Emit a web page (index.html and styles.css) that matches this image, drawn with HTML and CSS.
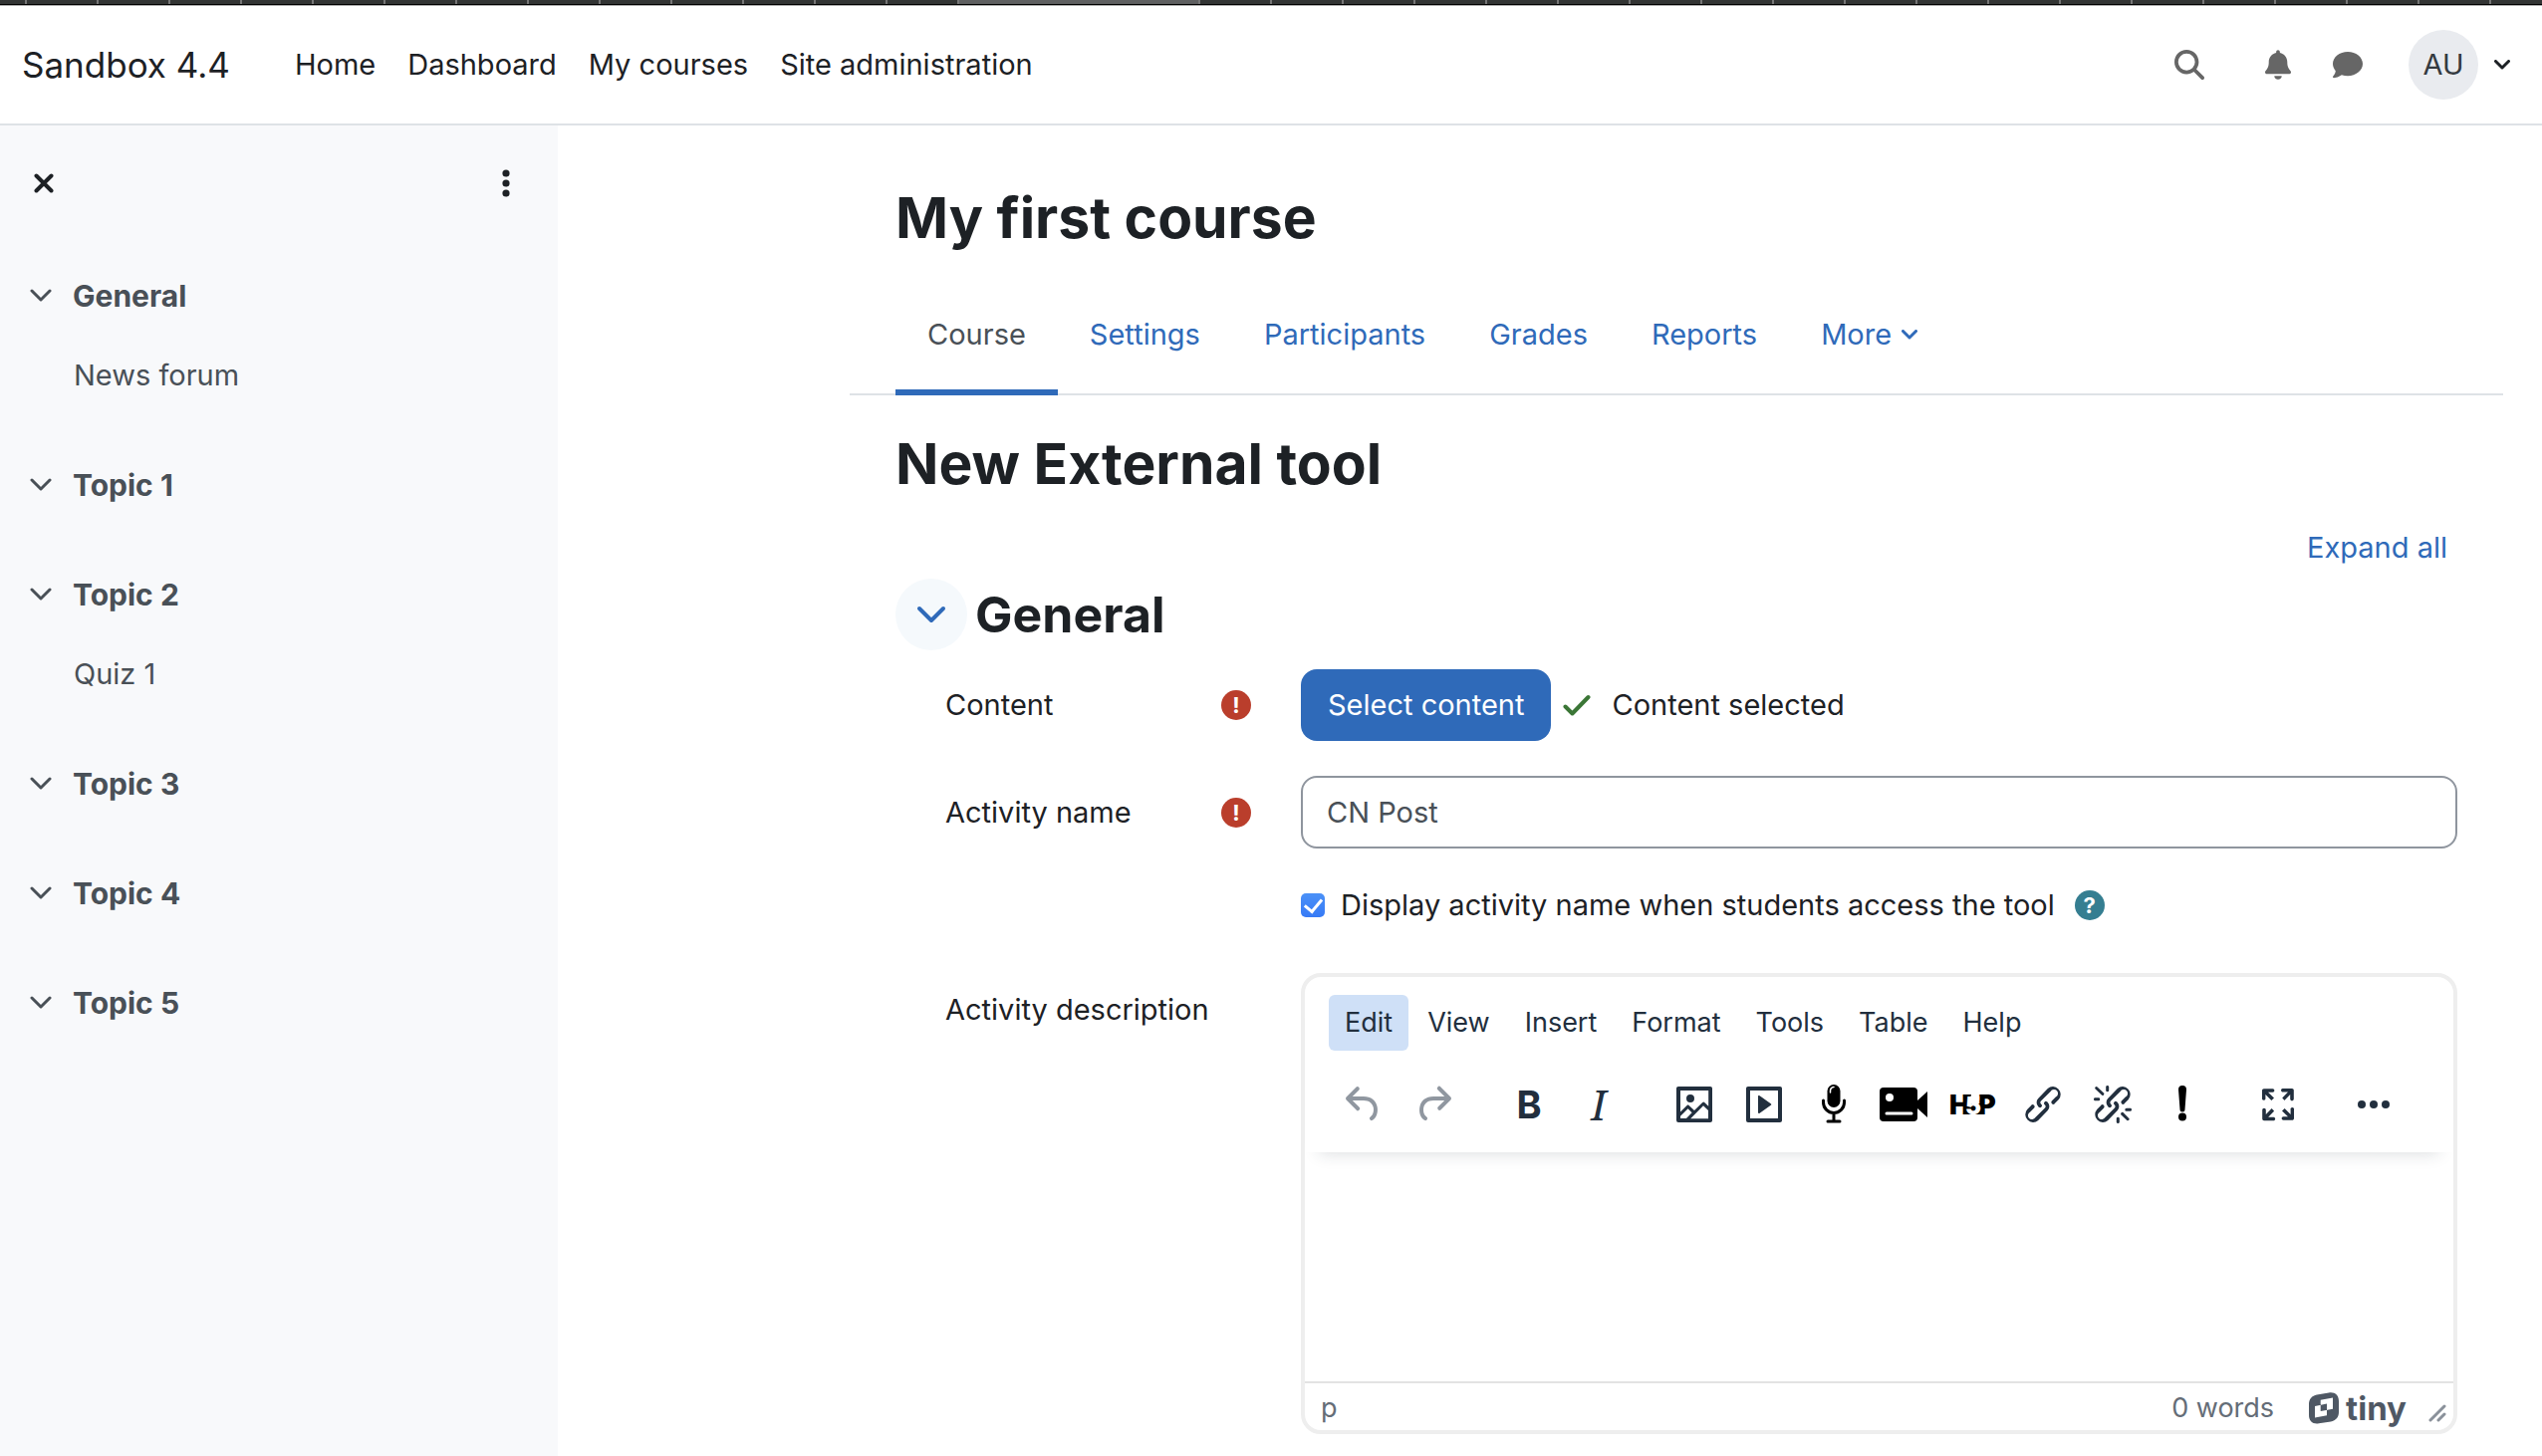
FILE: index.html
```html
<!doctype html>
<html lang="en">
  <head>
    <meta charset="UTF-8" />
    <meta name="viewport" content="width=device-width, initial-scale=1.0" />
    <title>Sandbox 4.4: New External tool</title>
    <link rel="stylesheet" href="styles.css">
  </head>
  <body>
    <div class="tabstrip">
      <div class="tabstrip-start"></div>
      <div class="tabstrip-current"></div>
      <div class="tabstrip-end"></div>
    </div>

    <header class="navbar">
      <a class="brand" href="#">Sandbox 4.4</a>
      <nav class="primary-nav" aria-label="Site">
        <a href="#">Home</a>
        <a href="#">Dashboard</a>
        <a href="#">My courses</a>
        <a href="#">Site administration</a>
      </nav>
      <div class="usernav">
        <button class="nav-icon search" aria-label="Search">
          <svg width="30" height="30" viewBox="0 0 512 512"><path d="M416 208c0 45.9-14.9 88.3-40 122.7L502.6 457.4c12.5 12.5 12.5 32.8 0 45.3s-32.8 12.5-45.3 0L330.7 376c-34.4 25.2-76.8 40-122.7 40C93.1 416 0 322.9 0 208S93.1 0 208 0S416 93.1 416 208zM208 352a144 144 0 1 0 0-288 144 144 0 1 0 0 288z"/></svg>
        </button>
        <button class="nav-icon" aria-label="Notifications">
          <svg width="26" height="30" viewBox="0 0 448 512"><path d="M224 0c-17.7 0-32 14.3-32 32V51.2C119 66 64 130.6 64 208v18.8c0 47-17.3 92.4-48.5 127.6l-7.4 8.3c-8.4 9.4-10.4 22.9-5.3 34.4S19.4 416 32 416H416c12.6 0 24-7.4 29.2-18.9s3.1-25-5.3-34.4l-7.4-8.3C401.3 319.2 384 273.9 384 226.8V208c0-77.4-55-142-128-156.8V32c0-17.7-14.3-32-32-32zm45.3 493.3c12-12 18.7-28.3 18.7-45.3H224 160c0 17 6.7 33.3 18.7 45.3s28.3 18.7 45.3 18.7s33.3-6.7 45.3-18.7z"/></svg>
        </button>
        <button class="nav-icon" aria-label="Messages">
          <svg width="30" height="30" viewBox="0 0 512 512"><path d="M512 240c0 114.900-114.600 208-256 208c-37.100 0-72.300-6.400-104.100-17.900c-11.900 8.700-31.300 20.600-54.300 30.600C73.600 471.100 44.700 480 16 480c-6.500 0-12.300-3.900-14.800-9.900c-2.500-6-1.100-12.800 3.400-17.400l.3-.3c.3-.3 .7-.7 1.300-1.400c1.100-1.200 2.800-3.100 4.900-5.700c4.100-5 9.600-12.400 15.200-21.600c10-16.600 19.500-38.400 21.400-62.900C17.700 326.800 0 285.100 0 240C0 125.100 114.600 32 256 32s256 93.100 256 208z"/></svg>
        </button>
        <button class="user-menu" aria-label="User menu">
          <span class="avatar">AU</span>
          <svg class="line-icon" width="16" height="10" viewBox="0 0 16 10"><path d="M1.500 1.500 8 8l6.500-6.500"/></svg>
        </button>
      </div>
    </header>

    <div class="page">
      <aside class="drawer">
        <div class="drawer-header">
          <button aria-label="Close course index">
            <svg class="close-icon" width="20" height="20" viewBox="0 0 20 20"><path d="m2.500 2.500 15 15m0-15-15 15"/></svg>
          </button>
          <button aria-label="Course index options">
            <svg width="8" height="28" viewBox="0 0 8 28"><circle cx="4" cy="4" r="3.600"/><circle cx="4" cy="14" r="3.600"/><circle cx="4" cy="24" r="3.600"/></svg>
          </button>
        </div>
        <nav class="course-index" aria-label="Course index">
          <section>
            <a class="section-link" href="#"><svg class="line-icon" width="22" height="14" viewBox="0 0 22 14"><path d="m2 2 9 9 9-9"/></svg>General</a>
            <a class="item-link" href="#">News forum</a>
          </section>
          <section>
            <a class="section-link" href="#"><svg class="line-icon" width="22" height="14" viewBox="0 0 22 14"><path d="m2 2 9 9 9-9"/></svg>Topic 1</a>
          </section>
          <section>
            <a class="section-link" href="#"><svg class="line-icon" width="22" height="14" viewBox="0 0 22 14"><path d="m2 2 9 9 9-9"/></svg>Topic 2</a>
            <a class="item-link" href="#">Quiz 1</a>
          </section>
          <section>
            <a class="section-link" href="#"><svg class="line-icon" width="22" height="14" viewBox="0 0 22 14"><path d="m2 2 9 9 9-9"/></svg>Topic 3</a>
          </section>
          <section>
            <a class="section-link" href="#"><svg class="line-icon" width="22" height="14" viewBox="0 0 22 14"><path d="m2 2 9 9 9-9"/></svg>Topic 4</a>
          </section>
          <section>
            <a class="section-link" href="#"><svg class="line-icon" width="22" height="14" viewBox="0 0 22 14"><path d="m2 2 9 9 9-9"/></svg>Topic 5</a>
          </section>
        </nav>
      </aside>

      <main class="content">
        <h1>My first course</h1>
        <nav class="tabs" aria-label="Course">
          <a class="active" href="#" aria-current="page">Course</a>
          <a href="#">Settings</a>
          <a href="#">Participants</a>
          <a href="#">Grades</a>
          <a href="#">Reports</a>
          <a href="#">More<svg class="line-icon" width="16" height="10" viewBox="0 0 16 10"><path d="M1.500 1.500 8 8l6.500-6.500"/></svg></a>
        </nav>

        <h2>New External tool</h2>
        <div class="collapse-all"><a href="#">Expand all</a></div>

        <form>
          <div class="fieldset-header">
            <button type="button" class="toggle" aria-label="Collapse General">
              <svg class="line-icon" width="30" height="18" viewBox="0 0 30 18"><path d="m3 3 12 12 12-12"/></svg>
            </button>
            <h3>General</h3>
          </div>

          <div class="form-row">
            <div class="form-label">
              <label for="select-content">Content</label>
              <span class="badge required" title="Required">!</span>
            </div>
            <div class="form-control">
              <button type="button" class="btn-primary" id="select-content">Select content</button>
              <svg class="tick" width="28" height="22" viewBox="0 0 28 22"><path d="m2.500 12.500 7 7L25.500 3"/></svg>
              <span>Content selected</span>
            </div>
          </div>

          <div class="form-row">
            <div class="form-label">
              <label for="name">Activity name</label>
              <span class="badge required" title="Required">!</span>
            </div>
            <input class="text-input" type="text" id="name" value="CN Post">
          </div>

          <div class="form-row">
            <div class="form-label"></div>
            <div class="form-control">
              <input class="checkbox" type="checkbox" id="show-title" checked>
              <label class="checkbox-label" for="show-title">Display activity name when students access the tool</label>
              <button type="button" class="badge help" aria-label="Help">?</button>
            </div>
          </div>

          <div class="form-row description">
            <div class="form-label"><label for="description">Activity description</label></div>
            <div class="editor">
              <div class="editor-header">
                <div class="menubar">
                  <button type="button" class="selected">Edit</button>
                  <button type="button">View</button>
                  <button type="button">Insert</button>
                  <button type="button">Format</button>
                  <button type="button">Tools</button>
                  <button type="button">Table</button>
                  <button type="button">Help</button>
                </div>
                <div class="toolbar">
                  <div class="group">
                    <button type="button" disabled aria-label="Undo">
                      <svg viewBox="0 0 24 24"><path d="M6.400 8H12c3.700 0 6.200 2 6.800 5.100.6 2.700-.4 5.600-2.300 6.800a1 1 0 0 1-1-1.800c1.100-.6 1.800-2.700 1.400-4.600-.5-2.100-2.100-3.500-4.900-3.500H6.400l3.300 3.300a1 1 0 1 1-1.400 1.400l-5-5a1 1 0 0 1 0-1.400l5-5a1 1 0 0 1 1.400 1.400L6.400 8Z"/></svg>
                    </button>
                    <button type="button" disabled aria-label="Redo">
                      <svg viewBox="0 0 24 24"><path d="M17.600 10H12c-2.800 0-4.400 1.400-4.900 3.500-.4 2 .3 4 1.400 4.600a1 1 0 1 1-1 1.800c-2-1.200-2.900-4.100-2.300-6.800.6-3 3-5.100 6.800-5.100h5.600l-3.300-3.300a1 1 0 1 1 1.400-1.400l5 5a1 1 0 0 1 0 1.400l-5 5a1 1 0 0 1-1.400-1.400l3.300-3.300Z"/></svg>
                    </button>
                  </div>
                  <div class="group">
                    <button type="button" class="bold" aria-label="Bold">B</button>
                    <button type="button" class="italic" aria-label="Italic">I</button>
                  </div>
                  <div class="group">
                    <button type="button" aria-label="Image">
                      <svg viewBox="0 0 24 24"><path fill-rule="evenodd" d="m5 15.700 3.300-3.200c.3-.3.7-.3 1 0L12 15l4.100-4c.3-.4.8-.4 1 0l2 1.900V5H5v10.700ZM5 18V19h3l2.800-2.900-2-2L5 17.900Zm14-3-2.500-2.400-6.400 6.500H19v-4ZM4 3h16c.6 0 1 .4 1 1v16c0 .6-.4 1-1 1H4a1 1 0 0 1-1-1V4c0-.6.4-1 1-1Zm6 8a2 2 0 1 0 0-4 2 2 0 0 0 0 4Z"/></svg>
                    </button>
                    <button type="button" aria-label="Multimedia">
                      <svg viewBox="0 0 24 24"><path fill-rule="evenodd" d="M4 3h16c.6 0 1 .4 1 1v16c0 .6-.4 1-1 1H4a1 1 0 0 1-1-1V4c0-.6.4-1 1-1Zm1 2v14h14V5H5Zm4.800 2.600 5.600 4a.5.5 0 0 1 0 .8l-5.600 4A.5.5 0 0 1 9 16V8a.5.5 0 0 1 .8-.4Z"/></svg>
                    </button>
                    <button type="button" class="black" aria-label="Record audio">
                      <svg viewBox="0 0 48 48"><rect x="17.500" y="4" width="13" height="23" rx="6.500"/><path d="M13.500 20v2a10.500 10.500 0 0 0 21 0v-2M24 33v8M18 41h12" fill="none" stroke="#000" stroke-width="3" stroke-linecap="round"/><path d="M20.500 12v-1.500a4 4 0 0 1 3.500-4" fill="none" stroke="#fff" stroke-width="1.500" stroke-linecap="round"/></svg>
                    </button>
                    <button type="button" class="black" aria-label="Record video">
                      <svg viewBox="0 0 48 48"><rect y="7" width="38" height="34" rx="4"/><path d="m38 20 10-9v26l-10-9Z"/><circle cx="10" cy="17" r="4" fill="#fff"/><path d="M7 33h25" stroke="#fff" stroke-width="3" stroke-linecap="round"/></svg>
                    </button>
                    <button type="button" class="black h5p" aria-label="H5P">
                      <svg viewBox="0 0 48 48"><path d="M17 14h5l-3 11h-3zM15 23h19v11H15z"/><text x="0" y="34">H</text><text x="29" y="34">P</text><text class="five" x="16" y="34">5</text></svg>
                    </button>
                    <button type="button" aria-label="Link">
                      <svg viewBox="0 0 24 24"><path d="M6.200 12.300a1 1 0 0 1 1.400 1.400l-2 2a2 2 0 1 0 2.600 2.800l4.800-4.800a1 1 0 0 0 0-1.400 1 1 0 1 1 1.400-1.300 2.900 2.900 0 0 1 0 4L9.600 20a3.900 3.900 0 0 1-5.500-5.500l2-2Zm11.600-.6a1 1 0 0 1-1.400-1.400l2-2a2 2 0 1 0-2.600-2.800L11 10.300a1 1 0 0 0 0 1.400A1 1 0 1 1 9.600 13a2.900 2.900 0 0 1 0-4L14.400 4a3.900 3.900 0 0 1 5.500 5.500l-2 2Z"/></svg>
                    </button>
                    <button type="button" aria-label="Unlink">
                      <svg viewBox="0 0 24 24"><path d="M6.200 12.300a1 1 0 0 1 1.400 1.400l-2 2a2 2 0 1 0 2.600 2.800l4.800-4.800a1 1 0 0 0 0-1.400 1 1 0 1 1 1.400-1.300 2.900 2.900 0 0 1 0 4L9.600 20a3.900 3.900 0 0 1-5.500-5.500l2-2Zm11.600-.6a1 1 0 0 1-1.400-1.400l2-2a2 2 0 1 0-2.600-2.800L11 10.300a1 1 0 0 0 0 1.400A1 1 0 1 1 9.600 13a2.900 2.900 0 0 1 0-4L14.400 4a3.900 3.900 0 0 1 5.500 5.500l-2 2ZM7.600 6.300a.8.8 0 0 1-1 1.100L3.300 4.200a.7.7 0 1 1 1-1l3.200 3.100ZM5.100 8.600a.8.8 0 0 1 0 1.500H3a.8.8 0 0 1 0-1.500H5Zm5-3.500a.8.8 0 0 1-1.500 0V3a.8.8 0 0 1 1.500 0V5Zm6 11.800a.8.8 0 0 1 1-1l3.200 3.200a.8.8 0 0 1-1 1L16 17Zm-2.200 2a.8.8 0 0 1 1.500 0V21a.8.8 0 0 1-1.500 0V19Zm5-3.500a.7.7 0 1 1 0-1.500H21a.8.8 0 0 1 0 1.500H19Z"/></svg>
                    </button>
                    <button type="button" class="black" aria-label="Accessibility checker">
                      <svg viewBox="0 0 48 48"><path d="M20 9a4 4 0 0 1 8 0l-1.500 20a2.500 2.500 0 0 1-5 0Z"/><circle cx="24" cy="36.500" r="4"/></svg>
                    </button>
                  </div>
                  <div class="group">
                    <button type="button" aria-label="Fullscreen">
                      <svg viewBox="0 0 24 24"><path d="m15.300 10-1.200-1.300 2.900-3h-2.300a.9.9 0 1 1 0-1.700H19c.5 0 .9.4.9.9v4.400a.9.9 0 1 1-1.800 0V7l-2.900 3Zm0 4 3 3v-2.300a.9.9 0 1 1 1.700 0V19c0 .5-.4.9-.9.9h-4.400a.9.9 0 1 1 0-1.800H17l-3-2.900 1.300-1.200ZM10 15.400l-2.900 3h2.300a.9.9 0 1 1 0 1.700H5a.9.9 0 0 1-.9-.9v-4.400a.9.9 0 1 1 1.800 0V17l2.900-3 1.200 1.300ZM8.700 10 5.700 7v2.300a.9.9 0 0 1-1.700 0V5c0-.5.4-.9.9-.9h4.400a.9.9 0 0 1 0 1.800H7l3 2.900-1.300 1.200Z"/></svg>
                    </button>
                  </div>
                  <div class="group">
                    <button type="button" aria-label="Reveal or hide additional toolbar items">
                      <svg viewBox="0 0 24 24"><circle cx="6" cy="12" r="2"/><circle cx="12" cy="12" r="2"/><circle cx="18" cy="12" r="2"/></svg>
                    </button>
                  </div>
                </div>
              </div>
              <textarea id="description"></textarea>
              <div class="statusbar">
                <span>p</span>
                <span class="wordcount">0 words</span>
                <a class="tiny" href="#">
                  <svg width="32" height="32" viewBox="0 0 32 32"><path fill-rule="evenodd" d="M9 2.500 21 .5C27-.5 31 3 31 9v11c0 5-3 8.500-8 9.400L11 31.300C5 32.300 1 29 1 23V12c0-5 3-8.600 8-9.500ZM7 14l12-2.400v11.600L7 25.600V14Zm5.700-6.200L25 5.400v11.300l-12.300 2.400V7.800Z"/></svg>
                  tiny
                </a>
                <svg class="resize" width="18" height="18" viewBox="0 0 18 18"><path d="M2 16 16 2M10 16l6-6"/></svg>
              </div>
            </div>
          </div>
        </form>
      </main>
    </div>
  </body>
</html>
```
FILE: styles.css
```css
:root {
  --primary: #2f6ab9;
  --text: #1d2125;
  --muted: #495057;
  --border: #dee2e6;
  --editor-text: #222f3e;
}

* {
  box-sizing: border-box;
}

body {
  margin: 0;
  min-height: 100vh;
  display: flex;
  flex-direction: column;
  font-family: Inter, Roboto, sans-serif;
  font-size: 29px;
  line-height: 44px;
  color: var(--text);
  background: #fff;
}

a {
  color: var(--primary);
  text-decoration: none;
}

button {
  font: inherit;
  color: inherit;
  padding: 0;
  border: 0;
  background: none;
}

svg {
  display: block;
  flex: none;
  fill: currentColor;
}

.line-icon {
  fill: none;
  stroke: currentColor;
  stroke-width: 3;
  stroke-linecap: round;
  stroke-linejoin: round;
}

/* Browser tab strip */

.tabstrip {
  display: flex;
  height: 5px;
  background: #333534;
  border-bottom: 1px solid #000;
}

.tabstrip-start,
.tabstrip-end {
  background: repeating-linear-gradient(to left, #777 0 2px, transparent 2px 72px);
}

.tabstrip-start {
  width: 963px;
}

.tabstrip-current {
  width: 240px;
  background: #5f6061;
}

.tabstrip-end {
  flex: 1;
  background: repeating-linear-gradient(to right, #777 0 2px, transparent 2px 72px);
}

/* Navbar */

.navbar {
  display: flex;
  align-items: center;
  height: 121px;
  padding: 0 32px 0 22px;
  border-top: 1px solid #aaa;
  border-bottom: 2px solid var(--border);
}

.navbar a {
  color: var(--text);
}

.brand {
  font-size: 35px;
  margin-right: 65px;
}

.primary-nav {
  display: flex;
  gap: 32px;
}

.usernav {
  display: flex;
  align-items: center;
  margin-left: auto;
}

.nav-icon {
  display: flex;
  justify-content: center;
  width: 70px;
  color: #666;
}

.search {
  margin-right: 19px;
}

.user-menu {
  display: flex;
  align-items: center;
  gap: 16px;
  margin-left: 26px;
}

.avatar {
  width: 70px;
  line-height: 70px;
  border-radius: 50%;
  background: #e9ebef;
  color: #343a40;
}

.page {
  flex: 1;
  display: flex;
}

/* Course index */

.drawer {
  width: 560px;
  flex: none;
  background: #f8f9fb;
}

.drawer-header {
  display: flex;
  align-items: center;
  justify-content: space-between;
  height: 116px;
  padding: 0 48px 0 34px;
}

.close-icon {
  stroke: currentColor;
  stroke-width: 4;
  stroke-linecap: round;
}

.course-index {
  display: flex;
  flex-direction: column;
  gap: 50px;
  padding: 25px 30px;
}

.course-index section {
  display: flex;
  flex-direction: column;
  gap: 20px;
}

.course-index a {
  display: flex;
  align-items: center;
  height: 60px;
  color: var(--muted);
}

.section-link {
  gap: 21px;
  font-size: 30px;
  font-weight: 700;
}

.item-link {
  padding-left: 44px;
}

/* Main column */

.content {
  flex: 1;
  max-width: 1660px;
  margin: 0 39px 0 auto;
  padding: 57px 0 16px;
}

h1,
h2,
h3 {
  margin: 0;
  font-weight: 700;
  line-height: 72px;
}

h1,
h2 {
  padding-left: 46px;
  font-size: 57px;
}

h3 {
  font-size: 50px;
}

.tabs {
  display: flex;
  margin-top: 26px;
  padding-left: 46px;
  border-bottom: 2px solid var(--border);
}

.tabs a {
  display: flex;
  align-items: center;
  gap: 10px;
  padding: 0 32px;
  margin-bottom: -2px;
  line-height: 110px;
  border-bottom: 6px solid transparent;
}

.tabs .active {
  color: var(--muted);
  border-color: var(--primary);
}

h2 {
  margin-top: 33px;
}

.collapse-all {
  margin-top: 26px;
  padding-right: 56px;
  text-align: right;
}

/* Form */

form {
  display: flex;
  flex-direction: column;
  gap: 35px;
  margin-top: 9px;
  padding: 0 46px;
}

.fieldset-header {
  display: flex;
  align-items: center;
  gap: 8px;
  margin-bottom: -16px;
}

.toggle {
  display: flex;
  align-items: center;
  justify-content: center;
  width: 72px;
  height: 72px;
  border-radius: 50%;
  background: #f5f9fc;
  color: var(--primary);
}

.toggle svg {
  stroke-width: 4;
}

.form-row {
  display: grid;
  grid-template-columns: 307px 1fr;
  column-gap: 50px;
  align-items: center;
  padding-left: 50px;
}

.form-label {
  display: flex;
  align-items: center;
  justify-content: space-between;
}

.form-control {
  display: flex;
  align-items: center;
}

.badge {
  width: 30px;
  height: 30px;
  border-radius: 50%;
  font-size: 22px;
  font-weight: 700;
  line-height: 30px;
  text-align: center;
  color: #fff;
}

.required {
  background: #ba3e2c;
}

.help {
  margin-left: 20px;
  background: #357e91;
}

.btn-primary {
  height: 72px;
  padding: 0 27px;
  border-radius: 16px;
  background: var(--primary);
  color: #fff;
}

.tick {
  margin: 0 21px 0 12px;
  fill: none;
  stroke: #3b7636;
  stroke-width: 4;
  stroke-linecap: round;
  stroke-linejoin: round;
}

.text-input {
  width: 100%;
  height: 73px;
  padding: 0 24px;
  border: 2px solid #8f959e;
  border-radius: 16px;
  font: inherit;
  color: var(--muted);
}

.checkbox {
  appearance: none;
  display: grid;
  place-items: center;
  width: 24px;
  height: 24px;
  margin: 0;
  border-radius: 5px;
  background: linear-gradient(#4b91f7, #367af6);
}

.checkbox:checked::after {
  content: "";
  width: 8px;
  height: 14px;
  margin-bottom: 4px;
  border: solid #fff;
  border-width: 0 3px 3px 0;
  rotate: 40deg;
}

.checkbox-label {
  margin-left: 16px;
}

.description {
  align-items: start;
  margin-top: 11px;
}

.description .form-label {
  padding-top: 15px;
}

/* Editor */

.editor {
  border: 4px solid #eee;
  border-radius: 20px;
  font-size: 27px;
  color: var(--editor-text);
}

.editor-header {
  padding: 18px 24px 14px;
  border-radius: 16px 16px 0 0;
  box-shadow: 0 16px 16px -14px rgb(34 47 62 / 15%);
}

.menubar {
  display: flex;
  gap: 3px;
}

.menubar button {
  height: 56px;
  padding: 0 16px;
  border-radius: 6px;
}

.menubar .selected {
  background: #cfe0f7;
}

.toolbar {
  display: flex;
  gap: 26px;
  margin-top: 20px;
}

.group {
  display: flex;
}

.toolbar button {
  display: flex;
  align-items: center;
  justify-content: center;
  width: 70px;
  height: 68px;
}

.toolbar button:disabled {
  color: #9097a0;
}

.toolbar svg {
  width: 48px;
  height: 48px;
}

.toolbar .black {
  color: #000;
}

.toolbar .bold {
  font-size: 38px;
  font-weight: 700;
}

.toolbar .italic {
  font-family: "Noto Serif", "Liberation Serif", serif;
  font-size: 42px;
  font-style: italic;
}

.h5p text {
  font-size: 27px;
  font-weight: 900;
}

.h5p .five {
  fill: #fff;
  font-size: 24px;
}

.editor textarea {
  display: block;
  width: 100%;
  height: 230px;
  padding: 24px;
  border: 0;
  outline: 0;
  resize: none;
  font: inherit;
  background: none;
}

.statusbar {
  display: flex;
  align-items: center;
  height: 49px;
  padding: 2px 7px 0 16px;
  border-top: 2px solid #e3e3e3;
  color: #656d77;
}

.wordcount {
  margin-left: auto;
}

.tiny {
  display: flex;
  align-items: center;
  gap: 6px;
  margin: 0 22px 0 34px;
  font-size: 33px;
  font-weight: 700;
  color: #4f5864;
}

.resize {
  align-self: end;
  margin-bottom: 8px;
  fill: none;
  stroke: #8a919a;
  stroke-width: 3;
  stroke-linecap: round;
}
```
